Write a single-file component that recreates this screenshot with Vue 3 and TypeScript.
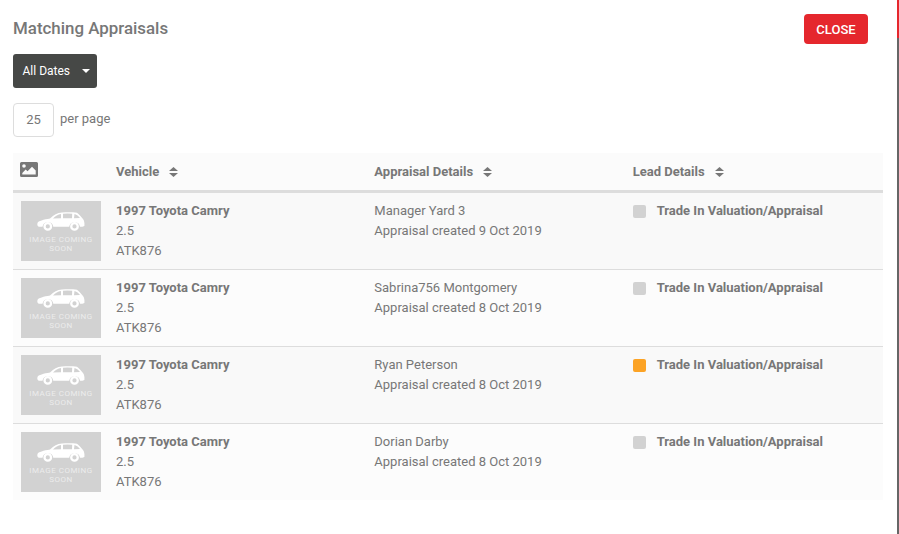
<template>
  <div class="page">
    <div class="edge"></div>
    <div class="top">
      <h2>Matching Appraisals</h2>
      <button class="close">CLOSE</button>
    </div>
    <button class="dates">All Dates<span class="caret"></span></button>
    <div class="perpage">
      <div class="num">25</div>
      <span>per page</span>
    </div>

    <table>
      <thead>
        <tr>
          <th class="col-img">
            <svg class="pic" width="18" height="15" viewBox="0 0 18 15">
              <path fill="#777" fill-rule="evenodd" d="M1.5 0h15A1.5 1.5 0 0 1 18 1.5v12a1.5 1.5 0 0 1-1.5 1.5h-15A1.5 1.5 0 0 1 0 13.500v-12A1.500 1.500 0 0 1 1.500 0ZM4 2.200a1.800 1.800 0 1 0 0 3.600 1.800 1.800 0 0 0 0-3.600ZM2.300 12.500h13.400V8.500L12 4.800 7.500 9.300 5.700 7.500 2.300 10.900Z" />
            </svg>
          </th>
          <th v-for="h in headers" :key="h" class="col">
            <span>{{ h }}</span>
            <svg class="sort" width="9" height="10" viewBox="0 0 9 10">
              <path fill="#777" d="M4.500 0 9 4H0ZM0 6h9L4.500 10Z" />
            </svg>
          </th>
        </tr>
      </thead>
      <tbody>
        <tr v-for="(r, i) in rows" :key="i">
          <td>
            <div class="thumb">
              <svg width="48" height="19" viewBox="0 0 48 19">
                <path fill="#fff" fill-rule="evenodd" d="M.5 11C1 9 7 7.500 13 6.500 17 3 20 1 25 .6c5-.4 11-.3 15 .2 2 1.500 4 4 6 6.200 1.200 1.500 1.700 4 1.400 7l-2 .8h-2.400a5.500 5.500 0 0 0-10.800 0H16.300a5.500 5.500 0 0 0-10.800 0H2C.3 14.300 0 12.500.5 11ZM16 6.500 24 6.300V2C21 2.300 18.500 4 16 6.500ZM26 6.300l9-.1.200-4.400a60 60 0 0 0-9.200 0ZM37 6.200l6-.2C41.500 4.300 40 2.700 37.500 2Z" />
                <path fill="#fff" fill-rule="evenodd" d="M10.800 10a4.400 4.400 0 1 1 0 8.800 4.400 4.400 0 0 1 0-8.800Zm0 2.300a2.100 2.100 0 1 0 0 4.200 2.100 2.100 0 0 0 0-4.200ZM37.500 10a4.400 4.400 0 1 1 0 8.800 4.400 4.400 0 0 1 0-8.800Zm0 2.300a2.100 2.100 0 1 0 0 4.200 2.100 2.100 0 0 0 0-4.200Z" />
              </svg>
              <div class="soon">IMAGE COMING<br />SOON</div>
            </div>
          </td>
          <td>
            <div class="strong">1997 Toyota Camry</div>
            <div>2.5</div>
            <div>ATK876</div>
          </td>
          <td>
            <div>{{ r.name }}</div>
            <div>Appraisal created {{ r.date }}</div>
          </td>
          <td>
            <div class="lead">
              <i class="box" :class="{ on: r.active }"></i>
              <span class="strong">Trade In Valuation/Appraisal</span>
            </div>
          </td>
        </tr>
      </tbody>
    </table>
  </div>
</template>

<script setup lang="ts">
const headers: string[] = ['Vehicle', 'Appraisal Details', 'Lead Details']

const rows = [
  { name: 'Manager Yard 3', date: '9 Oct 2019', active: false },
  { name: 'Sabrina756 Montgomery', date: '8 Oct 2019', active: false },
  { name: 'Ryan Peterson', date: '8 Oct 2019', active: true },
  { name: 'Dorian Darby', date: '8 Oct 2019', active: false },
]
</script>

<style>
html,
body {
  background: #fff;
  overflow: hidden;
}
</style>

<style scoped>
.page {
  position: relative;
  box-sizing: border-box;
  width: 899px;
  height: 534px;
  padding: 14px 16px 0 13px;
  font-family: Roboto, "Liberation Sans", sans-serif;
  font-size: 13px;
  line-height: 20px;
  color: #777;
  overflow: hidden;
}

/* sliver of the page behind the modal */
.edge {
  position: absolute;
  top: 0;
  right: 0;
  bottom: 0;
  width: 2px;
  background: linear-gradient(#e5272d 0 38px, #666 38px);
}

.top {
  display: flex;
  justify-content: space-between;
  align-items: flex-start;
  padding-right: 15px;
  height: 40px;
}

h2 {
  margin: 4px 0 0;
  font-size: 16.900px;
  line-height: 20px;
  font-weight: 500;
  color: #777;
}

button {
  border: none;
  font-family: inherit;
  color: #fff;
}

.close {
  width: 64px;
  height: 30px;
  border-radius: 4px;
  background: #e5272d;
  font-size: 13px;
  font-weight: 500;
  padding: 0;
}

.dates {
  display: flex;
  align-items: center;
  width: 84px;
  height: 34px;
  padding: 0 0 0 9.500px;
  border-radius: 3px;
  background: #464846;
  font-size: 12px;
}

.caret {
  margin-left: 12px;
  border-left: 4px solid transparent;
  border-right: 4px solid transparent;
  border-top: 4px solid #fff;
}

.perpage {
  display: flex;
  align-items: center;
  gap: 6px;
  margin-top: 15px;
  font-size: 13px;
}

.perpage span {
  margin-top: -2px;
}

.num {
  box-sizing: border-box;
  width: 41px;
  height: 34px;
  border: 1px solid #ddd;
  border-radius: 4px;
  text-align: center;
  line-height: 32px;
  font-size: 13px;
}

table {
  width: 870px;
  margin-top: 16px;
  border-collapse: collapse;
  table-layout: fixed;
}

th {
  height: 37px;
  padding: 0 8px;
  text-align: left;
  font-weight: 700;
  font-size: 13px;
  background: #fbfbfb;
  border-bottom: 3px solid #ddd;
}

.col-img {
  width: 79px;
}

.pic {
  display: block;
  margin: -5px 0 0 -1px;
}

.sort {
  margin-left: 10px;
  vertical-align: -1px;
}

td {
  height: 60px;
  padding: 8px;
  vertical-align: top;
  border-top: 1px solid #ddd;
  font-size: 13px;
}

tbody tr:first-child td {
  border-top: none;
}

tbody tr:nth-child(odd) td {
  background: #f9f9f9;
}

tbody tr:nth-child(even) td {
  background: #fcfcfc;
}

.thumb {
  display: flex;
  flex-direction: column;
  align-items: center;
  box-sizing: border-box;
  width: 80px;
  height: 60px;
  padding-top: 11px;
  background: #d2d2d2;
}

.thumb svg {
  display: block;
}

.soon {
  margin-top: 4px;
  font-size: 8px;
  line-height: 9px;
  letter-spacing: 0.5px;
  text-align: center;
  color: #ececec;
}

.strong {
  font-weight: 700;
}

.lead {
  display: flex;
  gap: 11px;
  align-items: center;
}

.box {
  width: 13px;
  height: 13px;
  border-radius: 2px;
  background: #d2d2d2;
}

.box.on {
  background: #fca325;
}
</style>
